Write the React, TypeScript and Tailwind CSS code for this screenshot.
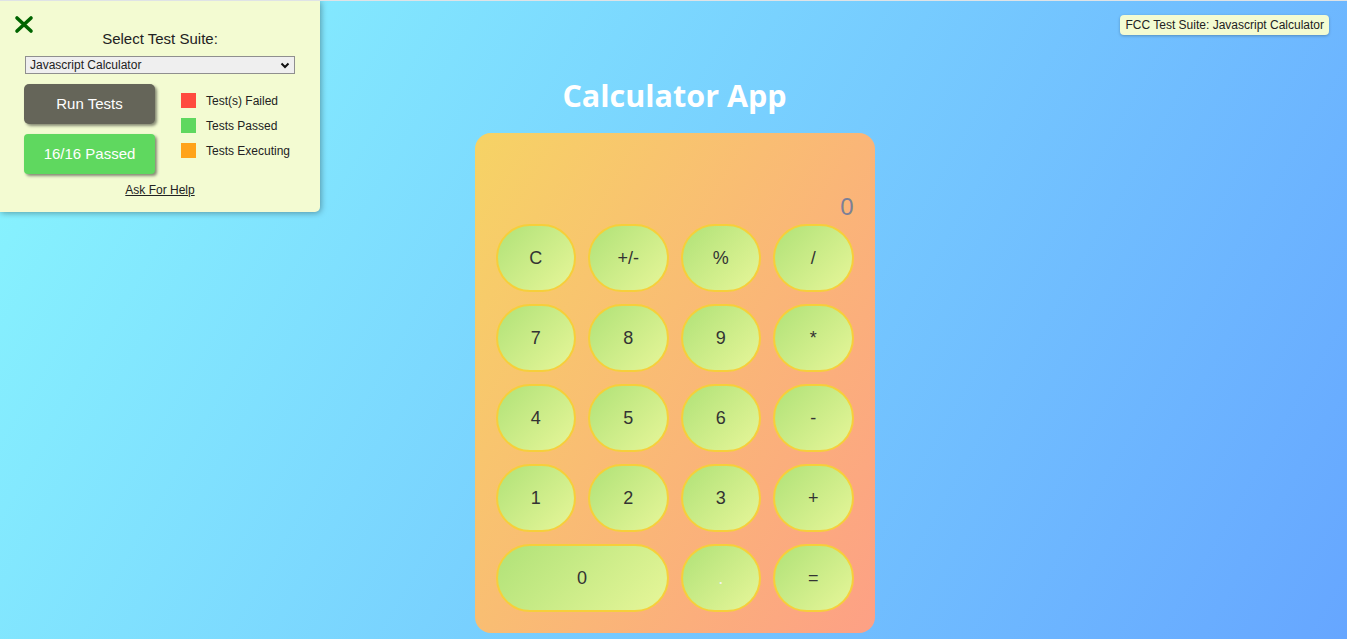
import React from 'react';

const keys: { label: string; wide?: boolean; light?: boolean }[] = [
  { label: 'C' }, { label: '+/-' }, { label: '%' }, { label: '/' },
  { label: '7' }, { label: '8' }, { label: '9' }, { label: '*' },
  { label: '4' }, { label: '5' }, { label: '6' }, { label: '-' },
  { label: '1' }, { label: '2' }, { label: '3' }, { label: '+' },
  { label: '0', wide: true }, { label: '.', light: true }, { label: '=' },
];

const legend = [
  { color: 'bg-[#ff4b40]', text: 'Test(s) Failed' },
  { color: 'bg-[#5fd85f]', text: 'Tests Passed' },
  { color: 'bg-[#ffa31a]', text: 'Tests Executing' },
];

const TestPanel: React.FC = () => (
  <div className="absolute left-0 top-0 w-[320px] h-[211px] bg-[#f3fbd2] rounded-br-[5px] shadow-[1px_1px_6px_rgba(0,0,0,0.35)] font-['Liberation_Sans',Arial,sans-serif] text-[#222]">
    <svg className="absolute left-[14px] top-[14px]" width="20" height="19" viewBox="0 0 20 19">
      <path d="M3 3 L17 16 M17 3 L3 16" stroke="#006400" strokeWidth="3.6" strokeLinecap="round" />
    </svg>
    <div className="pt-[29px] text-center text-[15px] leading-[18px]">Select Test Suite:</div>
    <div className="mx-[25px] mt-[8px] h-[18px] flex items-center justify-between bg-[#efefef] border border-[#8f8f8f] px-[4px] text-[12px]">
      <span>Javascript Calculator</span>
      <svg width="10" height="7" viewBox="0 0 10 7">
        <path d="M1.5 1.5 L5 5 L8.5 1.5" stroke="#111" strokeWidth="2" fill="none" />
      </svg>
    </div>
    <div className="flex mt-[10px] pl-[24px]">
      <div className="flex flex-col gap-[10px]">
        <div className="w-[131px] h-[40px] rounded-[5px] bg-[#656559] text-white text-[15px] flex items-center justify-center shadow-[2px_2px_3px_rgba(0,0,0,0.45)]">
          Run Tests
        </div>
        <div className="w-[131px] h-[40px] rounded-[4px] bg-[#5fd85f] text-white text-[15px] flex items-center justify-center shadow-[2px_2px_3px_rgba(0,0,0,0.45)]">
          16/16 Passed
        </div>
      </div>
      <div className="ml-[26px] mt-[9px] flex flex-col gap-[10px]">
        {legend.map((l) => (
          <div key={l.text} className="flex items-center h-[15px]">
            <div className={`w-[15px] h-[15px] ${l.color}`} />
            <span className="ml-[10px] text-[12px] leading-[14px]">{l.text}</span>
          </div>
        ))}
      </div>
    </div>
    <div className="mt-[7px] text-center text-[12px] underline">Ask For Help</div>
  </div>
);

export default function App() {
  return (
    <div className="relative w-full h-[639px] overflow-hidden border-t border-[#dfe3e6] bg-[linear-gradient(120deg,#89f7fe_0%,#66a6ff_100%)]">
      <TestPanel />
      <div className="absolute right-[18px] top-[14px] h-[20px] px-[5px] flex items-center rounded-[4px] bg-[#f3fbd2] text-[12px] text-[#222] font-['Liberation_Sans',Arial,sans-serif] shadow-[0_1px_3px_rgba(0,0,0,0.25)]">
        FCC Test Suite: Javascript Calculator
      </div>
      <div className="flex flex-col items-center pt-[73px] pl-[2px]">
        <h1 className="text-white font-bold text-[30.5px] leading-[42px] font-['Open_Sans',sans-serif]">Calculator App</h1>
        <div className="mt-[17px] w-[400px] h-[500px] rounded-[16px] px-[21px] pb-[20px] flex flex-col bg-[linear-gradient(120deg,#f6d365_0%,#fda085_100%)]">
          <div className="h-[91px] flex items-end justify-end pb-[3px] text-[24px] leading-[28px] text-[#7b8097] font-['Liberation_Sans',Arial,sans-serif]">
            0
          </div>
          <div className="grid grid-cols-4 gap-[12px] auto-rows-[68px]">
            {keys.map((k) => (
              <div
                key={k.label}
                className={`${k.wide ? 'col-span-2' : ''} rounded-full border-[2.5px] border-[#f6cf3a] bg-[linear-gradient(135deg,#b0e278_0%,#e7f699_100%)] flex items-center justify-center text-[18px] font-['Liberation_Sans',Arial,sans-serif] ${k.light ? 'text-[#f2f2f2]' : 'text-[#333]'}`}
              >
                {k.label}
              </div>
            ))}
          </div>
        </div>
      </div>
    </div>
  );
}
